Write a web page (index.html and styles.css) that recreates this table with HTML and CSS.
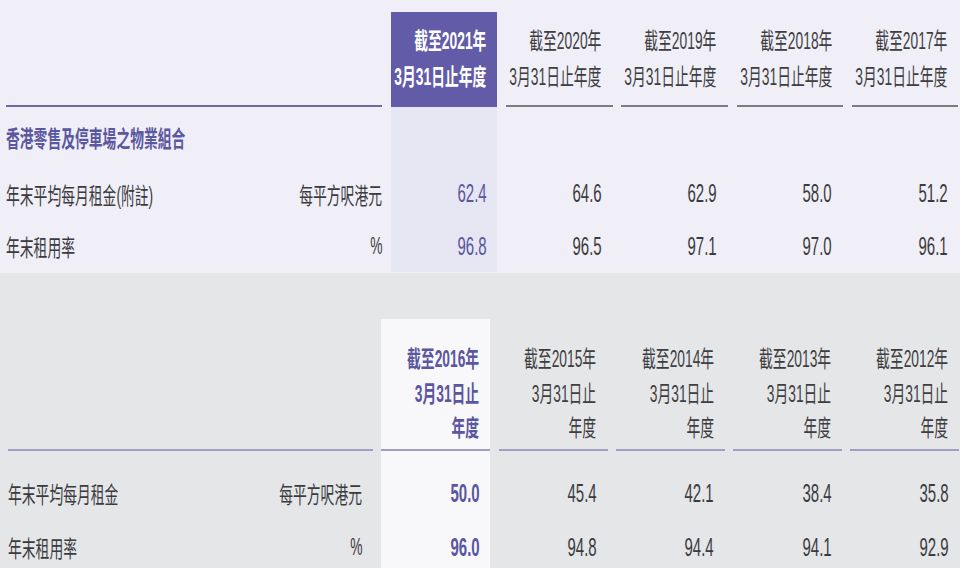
FILE: index.html
```html
<!DOCTYPE html>
<html lang="zh-Hant">
<head>
<meta charset="utf-8">
<title>物業組合</title>
<link rel="stylesheet" href="styles.css">
</head>
<body>
<div class="page">
  <section class="panel panel-top">
    <div class="row head">
      <div class="cell label-col"></div>
      <div class="cell hl"><span class="t">截至2021年<br>3月31日止年度</span></div>
      <div class="cell"><span class="t">截至2020年<br>3月31日止年度</span></div>
      <div class="cell"><span class="t">截至2019年<br>3月31日止年度</span></div>
      <div class="cell"><span class="t">截至2018年<br>3月31日止年度</span></div>
      <div class="cell"><span class="t">截至2017年<br>3月31日止年度</span></div>
    </div>
    <div class="row title-row">
      <div class="cell label-col"><span class="t-left section-title">香港零售及停車場之物業組合</span></div>
      <div class="cell hl"></div>
      <div class="cell"></div>
      <div class="cell"></div>
      <div class="cell"></div>
      <div class="cell"></div>
    </div>
    <div class="row data data-1">
      <div class="cell label-col"><span class="t-left">年末平均每月租金(附註)</span><span class="t">每平方呎港元</span></div>
      <div class="cell hl num"><span class="t">62.4</span></div>
      <div class="cell num"><span class="t">64.6</span></div>
      <div class="cell num"><span class="t">62.9</span></div>
      <div class="cell num"><span class="t">58.0</span></div>
      <div class="cell num"><span class="t">51.2</span></div>
    </div>
    <div class="row data data-2">
      <div class="cell label-col"><span class="t-left">年末租用率</span><span class="t">%</span></div>
      <div class="cell hl num"><span class="t">96.8</span></div>
      <div class="cell num"><span class="t">96.5</span></div>
      <div class="cell num"><span class="t">97.1</span></div>
      <div class="cell num"><span class="t">97.0</span></div>
      <div class="cell num"><span class="t">96.1</span></div>
    </div>
  </section>

  <section class="panel panel-bottom">
    <div class="row head">
      <div class="cell label-col"></div>
      <div class="cell hl"><span class="t">截至2016年<br>3月31日止<br>年度</span></div>
      <div class="cell"><span class="t">截至2015年<br>3月31日止<br>年度</span></div>
      <div class="cell"><span class="t">截至2014年<br>3月31日止<br>年度</span></div>
      <div class="cell"><span class="t">截至2013年<br>3月31日止<br>年度</span></div>
      <div class="cell"><span class="t">截至2012年<br>3月31日止<br>年度</span></div>
    </div>
    <div class="row data first">
      <div class="cell label-col"><span class="t-left">年末平均每月租金</span><span class="t">每平方呎港元</span></div>
      <div class="cell hl num"><span class="t">50.0</span></div>
      <div class="cell num"><span class="t">45.4</span></div>
      <div class="cell num"><span class="t">42.1</span></div>
      <div class="cell num"><span class="t">38.4</span></div>
      <div class="cell num"><span class="t">35.8</span></div>
    </div>
    <div class="row data">
      <div class="cell label-col"><span class="t-left">年末租用率</span><span class="t">%</span></div>
      <div class="cell hl num"><span class="t">96.0</span></div>
      <div class="cell num"><span class="t">94.8</span></div>
      <div class="cell num"><span class="t">94.4</span></div>
      <div class="cell num"><span class="t">94.1</span></div>
      <div class="cell num"><span class="t">92.9</span></div>
    </div>
  </section>
</div>
</body>
</html>
```

FILE: styles.css
```css
* { box-sizing: border-box; }

html, body {
  margin: 0;
  padding: 0;
  overflow: hidden;
}

body {
  width: 960px;
  height: 568px;
  background: #e5e6e8;
  font-family: "Liberation Sans", "Noto Sans CJK TC", "Noto Sans CJK SC", sans-serif;
  color: #3b3b3f;
}

.page {
  width: 960px;
}

/* The document is typeset in a condensed face: emulate by squeezing text horizontally */
.t,
.t-left {
  display: inline-block;
  white-space: nowrap;
  flex-shrink: 0;
  transform: scaleX(0.6);
}

.t {
  transform-origin: right center;
  text-align: right;
}

.t-left {
  transform-origin: left center;
  text-align: left;
}

.panel-top {
  background: #f0eff7;
  padding: 12px 0 0 6px;
  height: 273px;
}

.panel-bottom {
  background: #e5e6e8;
  padding: 46px 0 0 8px;
}

.row {
  display: grid;
}

.panel-top .row {
  grid-template-columns: 376.25px repeat(5, 106.5px);
  column-gap: 8.7px;
}

.panel-bottom .row {
  grid-template-columns: 365px repeat(5, 109px);
  column-gap: 8.3px;
}

.cell {
  display: flex;
  justify-content: flex-end;
  padding-right: 11px;
  font-size: 23px;
}

/* header rows */
.head .cell {
  align-items: flex-start;
  color: #3e3e42;
}

.panel-top .head .cell {
  height: 95px;
  padding-top: 11px;
  line-height: 36px;
  border-bottom: 2px solid #7b7b84;
}

.panel-top .head .label-col {
  border-bottom-color: #6c69a6;
}

.panel-top .head .hl {
  background: #625ca8;
  border-bottom-color: #625ca8;
  color: #ffffff;
  font-weight: bold;
}

.panel-bottom .head .cell {
  height: 132px;
  padding-top: 23px;
  line-height: 34.5px;
  border-bottom: 2px solid #a09dc6;
}

.panel-bottom .head .hl {
  color: #5a56a0;
  font-weight: bold;
}

/* highlighted column */
.panel-top .hl {
  background: #e6e5f2;
}

.panel-bottom .hl {
  background: #f8f8fb;
}

/* body rows */
.title-row .cell {
  height: 60px;
  align-items: center;
}

.title-row .label-col {
  justify-content: flex-start;
}

.section-title {
  font-weight: bold;
  color: #5b57a0;
}

.data .cell {
  align-items: center;
}

.panel-top .data-1 .cell { height: 53px; }
.panel-top .data-2 .cell { height: 52px; }

.panel-bottom .data .cell {
  height: 54px;
}

.panel-bottom .data.first .cell {
  height: 69px;
  padding-top: 15px;
}

.label-col {
  padding-right: 0;
}

.data .label-col {
  color: #3b3b3f;
}

.data .label-col .t-left {
  flex: 1 1 0;
  min-width: 0;
}

.panel-bottom .data .label-col {
  padding-right: 11px;
}

.num {
  font-size: 25px;
  color: #3b3b3f;
}

.panel-top .num.hl {
  color: #5a56a0;
}

.panel-bottom .num.hl {
  color: #5a56a0;
  font-weight: bold;
}
```
